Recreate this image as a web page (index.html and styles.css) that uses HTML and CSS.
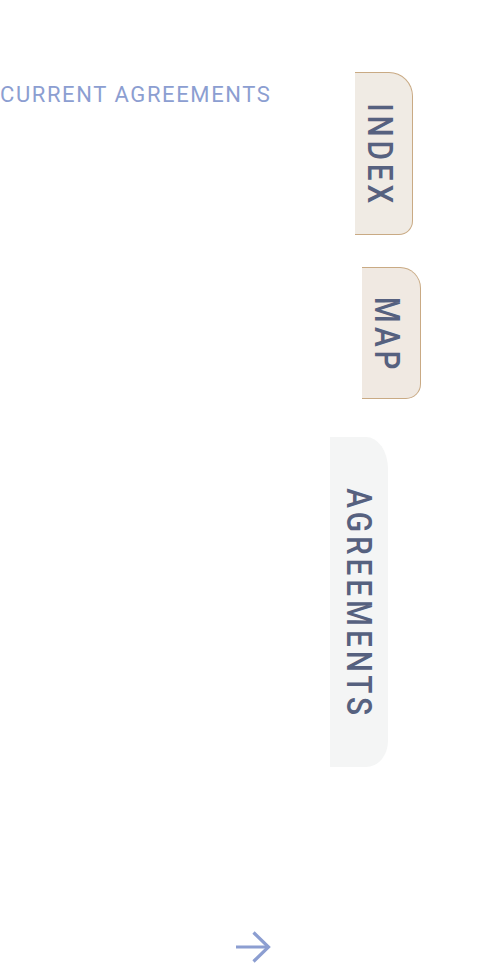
FILE: index.html
```html
<!DOCTYPE html>
<html>
<head>
<meta charset="utf-8">
<link rel="stylesheet" href="styles.css">
</head>
<body>
<div class="page">
  <div class="top">
    <div class="left">
      <h1 class="heading">CURRENT AGREEMENTS</h1>
    </div>
    <nav class="tabs">
      <div class="tab tab-index"><span class="tab-label">INDEX</span></div>
      <div class="tab tab-map"><span class="tab-label">MAP</span></div>
      <div class="tab tab-agreements"><span class="tab-label">AGREEMENTS</span></div>
    </nav>
  </div>
  <div class="footer">
    <svg class="arrow" width="36" height="34" viewBox="0 0 36 34" fill="none" stroke="#8c9ed1" stroke-width="3.2">
      <path d="M1 17 H34"/>
      <path d="M18.5 2.5 L33.5 17 L18.5 31.5"/>
    </svg>
  </div>
</div>
</body>
</html>
```
FILE: styles.css
```css
html, body {
  margin: 0;
  padding: 0;
  background: #ffffff;
}
.page {
  width: 495px;
  height: 972px;
  display: flex;
  flex-direction: column;
  font-family: Roboto, "Liberation Sans", sans-serif;
}
.top {
  display: flex;
}
.left {
  width: 330px;
}
.heading {
  margin: 82px 0 0 0;
  font-size: 22px;
  line-height: 26px;
  font-weight: 400;
  letter-spacing: 1.6px;
  color: #8c9ed1;
  white-space: nowrap;
}
.tabs {
  display: flex;
  flex-direction: column;
  align-items: flex-start;
}
.tab {
  display: flex;
  align-items: center;
  box-sizing: border-box;
  width: 58px;
}
.tab-label {
  writing-mode: vertical-rl;
  font-size: 35px;
  line-height: 35px;
  font-weight: 500;
  color: #56617f;
  letter-spacing: 4.6px;
  transform: translateY(2px) scaleY(0.85);
}
.tab-index {
  margin-top: 72px;
  margin-left: 25px;
  height: 163px;
  padding-left: 7px;
  background: #f0ebe4;
  border: 1px solid #c9aa84;
  border-left: none;
  border-radius: 0 24px 14px 0;
}
.tab-map {
  margin-top: 32px;
  margin-left: 32px;
  width: 59px;
  height: 132px;
  padding-left: 7px;
  background: #f0e9e2;
  border: 1px solid #c9aa84;
  border-left: none;
  border-radius: 0 21px 15px 0;
}
.tab-agreements {
  margin-top: 38px;
  margin-left: 0;
  height: 330px;
  padding-left: 11px;
  background: #f4f5f5;
  border-top-right-radius: 22px 32px;
  border-bottom-right-radius: 22px 26px;
}
.footer {
  margin-top: auto;
  padding-left: 235px;
  padding-bottom: 8px;
  display: flex;
}
.arrow {
  display: block;
}
```
